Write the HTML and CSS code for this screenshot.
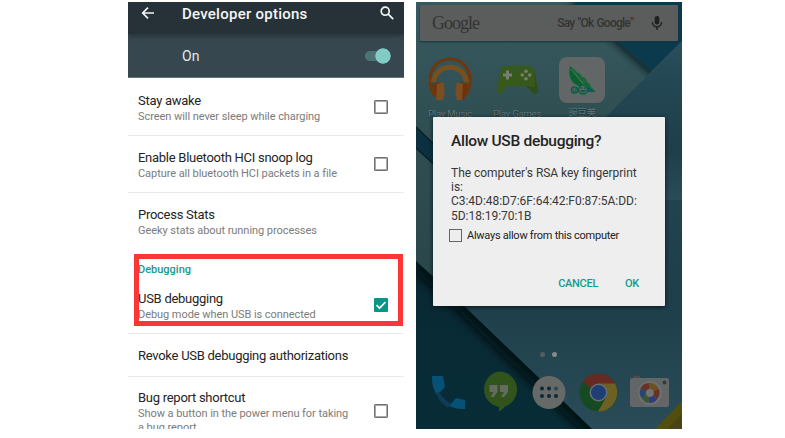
FILE: index.html
```html
<!DOCTYPE html>
<html lang="en">
<head>
<meta charset="utf-8">
<title>USB debugging</title>
<link rel="stylesheet" href="styles.css">
</head>
<body>
<main class="stage">
  <section class="settings">
    <header class="titlebar">
      <svg class="back" viewBox="0 0 14 14"><path d="M13 7H2M7 1.7 1.7 7 7 12.3"/></svg>
      <h1>Developer options</h1>
      <svg class="search" viewBox="0 0 14 14"><circle cx="5.2" cy="5.2" r="4"/><path d="m8.2 8.2 5 5"/></svg>
    </header>
    <div class="master"><span>On</span><i class="switch"></i></div>
    <div class="row">
      <div class="copy"><b>Stay awake</b><small>Screen will never sleep while charging</small></div>
      <i class="box"></i>
    </div>
    <div class="row">
      <div class="copy"><b>Enable Bluetooth HCI snoop log</b><small>Capture all bluetooth HCI packets in a file</small></div>
      <i class="box"></i>
    </div>
    <div class="row stats">
      <div class="copy"><b>Process Stats</b><small>Geeky stats about running processes</small></div>
    </div>
    <div class="group">
      <h2>Debugging</h2>
      <div class="row usb">
        <div class="copy"><b>USB debugging</b><small>Debug mode when USB is connected</small></div>
        <svg class="checked" viewBox="0 0 14 14"><rect width="14" height="14" rx="1"/><path d="m2.5 7.2 3 3 6-6.2"/></svg>
      </div>
      <div class="highlight"></div>
    </div>
    <div class="row revoke"><div class="copy"><b>Revoke USB debugging authorizations</b></div></div>
    <div class="row bug">
      <div class="copy"><b>Bug report shortcut</b><small>Show a button in the power menu for taking<br>a bug report</small></div>
      <i class="box"></i>
    </div>
  </section>

  <section class="phone">
    <svg class="wallpaper" viewBox="416 2 266 427">
      <defs>
        <linearGradient id="base" x1="0" y1="0" x2="0" y2="1"><stop offset="0" stop-color="#2a4f5c"/><stop offset=".25" stop-color="#234753"/><stop offset=".7" stop-color="#1e3f4a"/><stop offset="1" stop-color="#294c58"/></linearGradient>
        <linearGradient id="pale" x1="0" y1="0" x2="0" y2="1"><stop offset="0" stop-color="#375a60"/><stop offset=".4" stop-color="#304f53"/><stop offset="1" stop-color="#2b464a"/></linearGradient>
        <linearGradient id="deep" x1="0" y1="0" x2="0" y2="1"><stop offset="0" stop-color="#082834"/><stop offset="1" stop-color="#082d37"/></linearGradient>
        <filter id="soft" filterUnits="userSpaceOnUse" x="380" y="-40" width="340" height="520"><feGaussianBlur stdDeviation="6"/></filter>
        <filter id="fine" filterUnits="userSpaceOnUse" x="380" y="-40" width="340" height="520"><feGaussianBlur stdDeviation="3"/></filter>
        <clipPath id="low"><path d="M416 261 464 306 592 429H416Z"/></clipPath>
        <clipPath id="left"><path d="M416 2H573L652 71 607 116 440 282 416 261Z"/></clipPath>
      </defs>
      <path fill="url(#base)" d="M416 2H682V429H416Z"/>
      <path fill="url(#pale)" d="M416 2H573L652 71 440 282 416 261Z"/>
      <g clip-path="url(#left)"><path filter="url(#fine)" stroke="#06181f" stroke-width="8" opacity=".75" d="m573 2 82 72"/></g>
      <path fill="#0c303f" d="M416 127 440 150V169L416 148Z"/>
      <path stroke="#07202b" stroke-width="1.5" d="m416 127 24 23m-24-2 24 22"/>
      <path fill="#0b3a4d" d="M573 2H682V41L652 71Z"/>
      <path fill="#2a4e5c" d="m652 71 30-30v90h-90Z"/>
      <path fill="url(#base)" d="M652 71 682 41V200H523Z"/>
      <path fill="url(#deep)" d="M416 261 464 306 592 429H416Z"/>
      <g clip-path="url(#low)"><path filter="url(#soft)" stroke="#01090f" stroke-width="16" d="M416 261 464 306 600 437"/></g>
      <path fill="#504f0d" d="M655 429 682 401V429Z"/><path fill="#494315" d="m667 429 15-15v15Z"/>
    </svg>
    <div class="home">
      <div class="searchbar"><span class="logo">Google</span><span class="hint">Say "Ok Google"</span>
        <svg class="mic" viewBox="0 0 12 16"><rect x="3.7" y="1" width="4.6" height="8.6" rx="2.3" fill="#202020"/><path d="M1.4 7.3a4.6 4.6 0 0 0 9.2 0M6 12v3" fill="none" stroke="#202020" stroke-width="1.5"/></svg>
      </div>
      <div class="apps">
        <div class="app"><svg viewBox="0 0 46 46">
          <path d="M8 39Q2 31 3 22A20 20 0 0 1 43 22Q44 31 38 39" fill="none" stroke="#6f370d" stroke-width="3"/>
          <path d="M6.5 25A16.6 16.6 0 0 1 39.5 25" fill="none" stroke="#77501f" stroke-width="5"/>
          <path d="M5 27 14 25 16 42 9 43Z" fill="#703208"/><path d="m10 27 6-2q3 8 0 18l-7 0Z" fill="#7b4d20"/>
          <path d="m41 27-9-2-2 17 7 1Z" fill="#703208"/><path d="m36 27-6-2q-3 8 0 18h5Z" fill="#7b4d20"/>
        </svg><span>Play Music</span></div>
        <div class="app"><svg viewBox="0 0 46 46">
          <path d="M7 11Q7 9 10 9H36Q39 9 40 12L44 33Q44 37 40 37L32 29H13L7 37Q2 37 3 32Z" fill="#38591c"/>
          <path d="m32 29 8 8q4 0 4-4L40 12l1 18Z" fill="#2b4918" opacity=".7"/>
          <path d="M13.5 13.5v9M9 18h9" stroke="#777e70" stroke-width="3"/>
          <g fill="#777e70"><circle cx="32" cy="14.3" r="1.8"/><circle cx="32" cy="21.7" r="1.8"/><circle cx="28.3" cy="18" r="1.8"/><circle cx="35.7" cy="18" r="1.8"/></g>
        </svg><span>Play Games</span></div>
        <div class="app"><svg viewBox="0 0 46 46">
          <rect width="46" height="46" rx="8" fill="#636666"/>
          <path d="M11 9C9 20 12 26 20 29L36 35Z" fill="#08612e"/><path d="m11 9 5 4 3 3q3 0 4 4 4 0 5 5 3 1 4 5 3 2 4 5h-6Z" fill="#176835"/><path d="m12 12 18 22" stroke="#637065" stroke-width="1"/><path d="M26 29 37 35H25Z" fill="#075b60"/>
          <g fill="#636666" stroke="#095e42" stroke-width="1.4"><circle cx="15.5" cy="33" r="3.1"/><circle cx="24" cy="32.5" r="4.5"/></g>
          <g fill="#095e42"><circle cx="14.3" cy="32" r=".8"/><circle cx="16.8" cy="32" r=".8"/><path d="M13.5 33.5h4q-2 3-4 0Z"/><circle cx="22.3" cy="31" r="1"/><circle cx="25.7" cy="31" r="1"/><path d="M21 33h6q-3 5-6 0Z"/></g>
        </svg><span class="cjk" lang="zh">豌豆荚</span></div>
      </div>
      <div class="pages"><i></i><i></i></div>
      <svg class="dock" viewBox="426 368 250 48">
        <path d="M432 376h11l2 11-6 6q5 7 12 11l5-6 9 2v9q-14 1-25-10-9-10-8-23Z" fill="#065276"/>
        <path d="m436 393 3-1q5 8 12 12l-3 4q-8-5-12-15Z" fill="#103a57"/>
        <path d="M499 371.5a18 18 0 0 1 6 35q-2 3-6 5v-4.5A18 18 0 0 1 499 371.5Z" fill="#31541d"/>
        <path d="M489.5 385h8v7l-4 5h-3l3-5h-4Zm10.500 0h8v7l-4 5h-3l3-5h-4Z" fill="#646b60"/>
        <circle cx="549" cy="392.500" r="16.500" fill="#676969"/>
        <g fill="#092b35"><circle cx="542" cy="388.500" r="2"/><circle cx="549" cy="388.500" r="2"/><circle cx="542" cy="396" r="2"/><circle cx="549" cy="396" r="2"/><circle cx="556" cy="396" r="2"/><circle cx="556" cy="388.500" r="2" fill="#244b57"/></g>
        <circle cx="598.500" cy="392.500" r="19" fill="#174923"/>
        <path d="M598.500 392.500 582.500 382A19 19 0 0 1 615 383.500Z" fill="#672a22"/>
        <path d="M598.500 383.500H615A19 19 0 0 1 598 411.500L607 396Z" fill="#6e6022"/>
        <circle cx="598.500" cy="392.500" r="9" fill="#667075"/><circle cx="598.500" cy="392.500" r="7.500" fill="#203e76"/>
        <rect x="633" y="375.500" width="7" height="4" rx="1" fill="#514a4b"/><rect x="630" y="378" width="39" height="29" rx="2" fill="#626666"/>
        <circle cx="650" cy="393" r="12" fill="#6c7070"/><circle cx="664.500" cy="382.500" r="1.900" fill="#303b3c"/>
        <g fill="none" stroke-width="6"><path stroke="#663126" d="M643 390a7 7 0 0 1 6-4"/><path stroke="#6d5221" d="M649 386a7 7 0 0 1 7 4"/><path stroke="#683125" d="M656 390a7 7 0 0 1-1 7"/><path stroke="#303c76" d="M655 397a7 7 0 0 1-6 3"/><path stroke="#39543a" d="M649 400a7 7 0 0 1-5-4"/><path stroke="#22466f" d="M644 396a7 7 0 0 1-1-6"/></g>
        <circle cx="650" cy="393" r="3.800" fill="#707474"/>
      </svg>
    </div>
    <div class="dialog">
      <h2>Allow USB debugging?</h2>
      <p>The computer's RSA key fingerprint<br>is:<br>C3:4D:48:D7:6F:64:42:F0:87:5A:DD:<br>5D:18:19:70:1B</p>
      <div class="always"><i></i><span>Always allow from this computer</span></div>
      <div class="actions"><span>CANCEL</span><span>OK</span></div>
    </div>
  </section>
</main>
</body>
</html>
```
FILE: styles.css
```css
* { box-sizing: border-box; }
body { margin: 0; background: #fff; font-family: Roboto, sans-serif; color: #2b2b2b; }
h1, h2, p { margin: 0; }
i { display: block; }
svg { display: block; flex: none; }
.stage { display: flex; gap: 12px; height: 438px; padding: 2px 0 0 128px; overflow: hidden; }
.settings { width: 276px; height: 427px; overflow: hidden; background: #fff; }
.titlebar { display: flex; align-items: center; height: 32px; padding: 0 10px 9px 13px; background: #263238; color: #f4f6f6; box-shadow: 0 2px 5px #263238; position: relative; }
.titlebar svg { width: 14px; height: 14px; fill: none; stroke: #f2f5f5; stroke-width: 1.7; }
.back { margin-top: -2px; }
.search { margin-top: -2px; }
.titlebar h1 { flex: 1; margin-left: 27px; font-size: 15px; font-weight: 500; line-height: 20px; letter-spacing: .25px; white-space: nowrap; }
.master { display: flex; align-items: center; justify-content: space-between; height: 44px; padding: 1px 13px 0 54px; border-bottom: 1px solid #61757c; background: #37474f; color: #e4e9eb; font-size: 14px; }
.switch { width: 26px; height: 16px; background: radial-gradient(circle at 18px 8px, #80cbc4 7.3px, transparent 8px), linear-gradient(#4d7375, #4d7375) 5px 3px / 12px 10px no-repeat, radial-gradient(circle at 5px 8px, #4d7375 4.7px, transparent 5.3px); }
.row { display: flex; justify-content: space-between; align-items: flex-start; height: 57px; padding: 14px 16px 0 10px; border-bottom: 1px solid #eaeaea; }
.master + .row { height: 58px; padding-top: 15px; }
.copy { display: grid; white-space: nowrap; }
.copy b { font-size: 13px; line-height: 16px; font-weight: 400; letter-spacing: -.27px; color: #242424; }
.copy small { font-size: 11px; line-height: 14px; margin-top: 1px; letter-spacing: -.06px; color: #7b7b7b; }
.box { flex: none; width: 14px; height: 14px; margin-top: 7px; border: 1.5px solid #707070; outline: .5px solid #aaa; outline-offset: -2px; border-radius: 1px; }
.stats { height: 60px; border: 0; }
.group { position: relative; height: 81px; padding-top: 10px; border-bottom: 1px solid #eaeaea; }
.group h2 { padding-left: 10px; font-size: 11px; line-height: 14px; font-weight: 500; color: #159b8d; }
.group .row { height: 56px; padding-top: 14px; border: 0; }
.highlight { position: absolute; left: 6px; top: 1px; width: 269px; height: 72px; border: 5px solid #fc3535; }
.checked { width: 14px; height: 14px; margin-top: 7px; fill: #079688; }
.checked path { fill: none; stroke: #fff; stroke-width: 1.7; }
.revoke { height: 43px; }
.bug { border: 0; height: 60px; padding-top: 13px; }
.bug .box { margin-top: 14px; }
.phone { display: grid; width: 266px; height: 427px; overflow: hidden; }
.phone > * { grid-area: 1 / 1; }
.wallpaper { width: 266px; height: 427px; }
.home { display: flex; flex-direction: column; width: 266px; height: 427px; padding: 3px 4px 0; z-index: 1; }
.searchbar { display: flex; align-items: center; height: 36px; padding: 0 15px 0 12px; background: #5b5c5c; border-radius: 1px; box-shadow: 0 1px 2px #17343c; }
.logo { flex: 1; font: 18px/28px "Liberation Serif", serif; color: #333; letter-spacing: -1px; }
.hint { margin-right: 18px; font-size: 12px; font-weight: 500; letter-spacing: -.75px; word-spacing: .7px; color: #343434; white-space: nowrap; }
.mic { width: 12px; height: 16px; }
.apps { display: flex; gap: 20px; padding: 16px 0 0 7px; }
.app { width: 46px; height: 65px; display: grid; justify-items: center; color: #65767a; font-size: 9.5px; letter-spacing: -.2px; white-space: nowrap; }
.app svg { width: 46px; height: 46px; }
.app span { line-height: 15px; margin-top: 1px; text-shadow: 0 1px 1px #122e34; }
.app .cjk { font-family: Roboto, "Noto Sans CJK SC", sans-serif; margin-top: -1px; }
.pages { display: flex; gap: 7px; margin: 230px 0 0 120px; }
.pages i { width: 5px; height: 5px; border-radius: 50%; background: #565c60; }
.pages i + i { background: #85898b; }
.dock { width: 250px; height: 48px; margin: 11px 0 0 6px; }
.dialog { z-index: 2; margin: 115px 0 0 17px; width: 232px; height: 189px; padding: 14px 17px 0 18px; background: #eee; border-radius: 1px; box-shadow: 0 1px 4px #06161b; }
.dialog h2 { font-size: 15.5px; line-height: 20px; font-weight: 500; letter-spacing: -.3px; color: #242424; white-space: nowrap; }
.dialog p { margin-top: 15px; font-size: 12px; line-height: 14.2px; letter-spacing: -.03px; color: #383838; white-space: nowrap; }
.always { display: flex; align-items: center; height: 15px; margin: 5px 0 0 -2px; font-size: 11px; letter-spacing: -.26px; white-space: nowrap; color: #222; }
.always i { width: 13px; height: 13px; margin-right: 5px; border: 1px solid #666; }
.actions { display: flex; justify-content: flex-end; gap: 27px; margin: 33px 9px 0 0; font-size: 11px; line-height: 16px; font-weight: 500; letter-spacing: -.3px; color: #159b8d; }
```
